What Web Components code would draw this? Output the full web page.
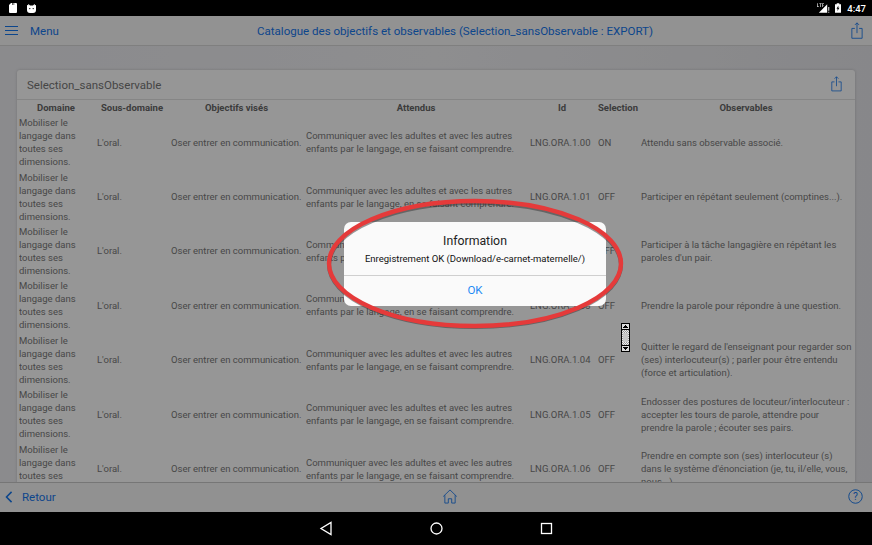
<!DOCTYPE html>
<html lang="fr">
<head>
<meta charset="utf-8">
<title>Catalogue</title>
<style>
  html, body { margin: 0; height: 100%; background: #000; }
  body { font-family: Roboto, "Liberation Sans", sans-serif; overflow: hidden; }
</style>
</head>
<body>
<app-screen>
  <status-bar slot="status"></status-bar>
  <top-bar slot="top" title-text="Catalogue des objectifs et observables (Selection_sansObservable : EXPORT)"></top-bar>
  <catalogue-card slot="main" heading="Selection_sansObservable"></catalogue-card>
  <bottom-bar slot="bottom"></bottom-bar>
  <info-dialog slot="overlay" heading="Information" message="Enregistrement OK (Download/e-carnet-maternelle/)"></info-dialog>
  <nav-bar slot="nav"></nav-bar>
</app-screen>

<script>
const SHARE_ICON = `<svg viewBox="0 0 14 20" fill="none" stroke="currentColor" stroke-width="1"><path d="M4.5 7.5H1v11.5h12V7.5H9.5"/><path d="M7 13V1M4.6 3.4 7 1l2.4 2.4"/></svg>`;

class AppScreen extends HTMLElement {
    constructor() {
        super();
        this.attachShadow({ mode: 'open' });
    }

    connectedCallback() {
        this.shadowRoot.innerHTML = `
        <style>
            :host { display: flex; flex-direction: column; width: 872px; height: 545px; position: relative; }
            .app { flex: 1; min-height: 0; display: flex; flex-direction: column; position: relative; }
            main {
                flex: 1; min-height: 0; overflow: hidden; padding: 24px 17px 0;
                background: linear-gradient(90deg, #ececf0 0, #f1f1f4 50%, #e6e6ea 100%);
            }
            .dim { position: absolute; inset: 0; background: rgba(0, 0, 0, .41); }
        </style>
        <slot name="status"></slot>
        <div class="app">
            <slot name="top"></slot>
            <main><slot name="main"></slot></main>
            <slot name="bottom"></slot>
            <div class="dim"></div>
            <slot name="overlay"></slot>
        </div>
        <slot name="nav"></slot>`;
    }
}

class StatusBar extends HTMLElement {
    constructor() {
        super();
        this.attachShadow({ mode: 'open' });
    }

    connectedCallback() {
        this.shadowRoot.innerHTML = `
        <style>
            :host { display: flex; align-items: center; height: 16px; background: #000; color: #fff; padding: 0 6px 0 9px; flex: none; }
            svg { display: block; fill: #fff; }
            .left { display: flex; align-items: center; gap: 10px; }
            .right { margin-left: auto; display: flex; align-items: center; gap: 5px; }
            span { font: 500 9.5px Roboto, sans-serif; margin-left: 1px; }
        </style>
        <div class="left">
            <svg width="8" height="10" viewBox="0 0 8 10"><path d="M2 0h1v2h.6V0h1v2h.6V0H7a1 1 0 0 1 1 1v8a1 1 0 0 1-1 1H1a1 1 0 0 1-1-1V2z"/></svg>
            <svg width="9" height="9" viewBox="0 0 9 9"><path d="M1.5 0 3 1.4h3L7.5 0l.5.5L7 1.6a1 1 0 0 1 2 1V6a3 3 0 0 1-3 3H3A3 3 0 0 1 0 6V2.6a1 1 0 0 1 2-1L1 .5z"/><circle cx="2.8" cy="4.6" r=".7" fill="#000"/><circle cx="6.2" cy="4.6" r=".7" fill="#000"/></svg>
        </div>
        <div class="right">
            <svg width="13" height="10" viewBox="0 0 14 10"><path d="M11 1v9H2z"/><path d="M12.2 4h1v4h-1zM12.2 9h1v1h-1z"/><path d="M0 0h.8v3H2v.8H0zM2.6 0h2.4v.8h-.8v3h-.8V.8h-.8zM5.6 0h1.8v.8h-1v.9h.9v.7h-.9v1.4h-.8z" opacity=".8"/></svg>
            <svg width="6" height="10" viewBox="0 0 7 11"><path fill-rule="evenodd" d="M2 0h3v1h2v10H0V1h2zM4 2.5 1.8 6.3h1.3L2.8 9l2.4-3.9H3.8z"/></svg>
            <span>4:47</span>
        </div>`;
    }
}

class TopBar extends HTMLElement {
    constructor() {
        super();
        this.attachShadow({ mode: 'open' });
    }

    connectedCallback() {
        this.shadowRoot.innerHTML = `
        <style>
            :host {
                display: grid; grid-template-columns: 1fr auto 1fr; align-items: center; flex: none;
                height: 29px; background: #f8f8f8; border-bottom: 1px solid #d9d9d9; color: #1677ee;
            }
            .menu { display: flex; align-items: center; gap: 12px; padding-left: 5px; font-size: 11.5px; }
            .burger { width: 13px; height: 7px; margin-bottom: 1px; border-top: 1px solid; border-bottom: 1px solid; position: relative; }
            .burger::after { content: ""; position: absolute; left: 0; right: 0; top: 3px; border-top: 1px solid; }
            .title { font-size: 11.55px; padding-left: 38px; }
            .share { justify-self: end; width: 12px; height: 17px; margin-right: 9px; }
        </style>
        <div class="menu"><div class="burger"></div><span>Menu</span></div>
        <div class="title">${this.getAttribute('title-text')}</div>
        <div class="share">${SHARE_ICON}</div>`;
    }
}

class CatalogueCard extends HTMLElement {
    constructor() {
        super();
        this.attachShadow({ mode: 'open' });
    }

    connectedCallback() {
        const rows = [
            ['1.00', 'ON', 'Attendu sans observable associé.'],
            ['1.01', 'OFF', 'Participer en répétant seulement (comptines...).'],
            ['1.02', 'OFF', 'Participer à la tâche langagière en répétant les paroles d\'un pair.'],
            ['1.03', 'OFF', 'Prendre la parole pour répondre à une question.'],
            ['1.04', 'OFF', 'Quitter le regard de l\'enseignant pour regarder son (ses) interlocuteur(s) ; parler pour être entendu (force et articulation).'],
            ['1.05', 'OFF', 'Endosser des postures de locuteur/interlocuteur : accepter les tours de parole, attendre pour prendre la parole ; écouter ses pairs.'],
            ['1.06', 'OFF', 'Prendre en compte son (ses) interlocuteur (s) dans le système d\'énonciation (je, tu, il/elle, vous, nous...).']
        ];
        const cols = ['Domaine', 'Sous-domaine', 'Objectifs visés', 'Attendus', 'Id', 'Selection', 'Observables'];
        this.shadowRoot.innerHTML = `
        <style>
            :host { display: block; background: #fff; border-radius: 3px; box-shadow: 0 0 3px rgba(0,0,0,.18); height: 440px; overflow: hidden; }
            header {
                display: flex; align-items: center; justify-content: space-between; height: 29px;
                padding: 0 13px 0 10px; border-bottom: 1px solid #e2e2e2; font-size: 11.5px; color: #777;
            }
            .share { width: 11px; height: 15px; margin-bottom: 2px; color: #1677ee; }
            .grid { display: grid; grid-template-columns: 78px 74px 135px 224px 68px 43px 214px; padding-left: 2px; font-size: 9.5px; color: #7a7a7a; }
            .th { height: 15px; line-height: 15px; text-align: center; font-weight: 700; padding-right: 4px; white-space: nowrap; color: #666; }
            .td { height: 54.4px; display: flex; align-items: center; line-height: 13px; overflow: hidden; padding-right: 2px; box-sizing: border-box; }
            .td > span { display: block; }
        </style>
        <header><span>${this.getAttribute('heading')}</span><div class="share">${SHARE_ICON}</div></header>
        <div class="grid">
            ${cols.map(c => `<div class="th">${c}</div>`).join('')}
            ${rows.map(r => `
                <div class="td"><span>Mobiliser le langage dans toutes ses dimensions.</span></div>
                <div class="td"><span>L'oral.</span></div>
                <div class="td"><span>Oser entrer en communication.</span></div>
                <div class="td"><span>Communiquer avec les adultes et avec les autres enfants par le langage, en se faisant comprendre.</span></div>
                <div class="td"><span>LNG.ORA.${r[0]}</span></div>
                <div class="td"><span>${r[1]}</span></div>
                <div class="td"><span>${r[2]}</span></div>`).join('')}
        </div>`;
    }
}

class BottomBar extends HTMLElement {
    constructor() {
        super();
        this.attachShadow({ mode: 'open' });
    }

    connectedCallback() {
        this.shadowRoot.innerHTML = `
        <style>
            :host {
                display: grid; grid-template-columns: 1fr auto 1fr; align-items: center; flex: none;
                height: 27px; padding-bottom: 2px; background: #f6f6f6; border-top: 1px solid #c9c9c9; color: #1677ee;
            }
            .back { display: flex; align-items: center; gap: 9px; padding-left: 5px; font-size: 11.5px; }
            svg { display: block; }
            .home { margin-left: 28px; }
            .help { justify-self: end; margin-right: 9px; }
        </style>
        <div class="back">
            <svg width="8" height="12" viewBox="0 0 9 14" fill="none" stroke="currentColor" stroke-width="1.8"><path d="M7.5 1 1.6 7l5.9 6"/></svg>
            <span>Retour</span>
        </div>
        <svg class="home" width="16" height="15" viewBox="0 0 16 16" fill="none" stroke="currentColor" stroke-width=".9"><path d="M.8 8 8 1l7.2 7M2.500 6.600V15h3.700v-4.600h3.600V15h3.700V6.600"/></svg>
        <svg class="help" width="15" height="15" viewBox="0 0 16 16"><circle cx="8" cy="8" r="7.2" fill="none" stroke="currentColor" stroke-width="1"/><text x="8" y="12" text-anchor="middle" font-family="Roboto" font-size="11" fill="currentColor">?</text></svg>`;
    }
}

class InfoDialog extends HTMLElement {
    constructor() {
        super();
        this.attachShadow({ mode: 'open' });
    }

    connectedCallback() {
        this.shadowRoot.innerHTML = `
        <style>
            :host { position: absolute; left: 344px; top: 206px; width: 262px; height: 84px; display: flex; flex-direction: column; background: #fafafa; border-radius: 7px; color: #111; text-align: center; }
            .body { height: 54px; border-bottom: 1px solid #cfcfcf; box-sizing: border-box; padding-top: 11px; }
            h2 { margin: 0; font: 400 12.3px/16px Roboto, sans-serif; color: #222; }
            p { margin: 3px 0 0; font-size: 9.5px; line-height: 13px; }
            .ok { flex: 1; display: flex; align-items: center; justify-content: center; padding-bottom: 2px; color: #1f8bf5; font-size: 11.5px; }
            .ring { position: absolute; left: -22px; top: -28px; overflow: visible; pointer-events: none; }
            .scroller { position: absolute; left: 277px; top: 101px; width: 9px; height: 29px; }
        </style>
        <div class="body"><h2>${this.getAttribute('heading')}</h2><p>${this.getAttribute('message')}</p></div>
        <div class="ok">OK</div>
        <svg class="ring" width="306" height="140" viewBox="0 0 306 140" fill="none">
            <ellipse cx="153" cy="71" rx="146" ry="62" stroke="#333" stroke-opacity=".5" stroke-width="4"/>
            <ellipse cx="153" cy="69.5" rx="146" ry="62.5" stroke="#e53a3a" stroke-width="4.4"/>
        </svg>
        <svg class="scroller" viewBox="0 0 9 29" shape-rendering="crispEdges">
            <defs><pattern id="check" width="2" height="2" patternUnits="userSpaceOnUse"><rect width="2" height="2" fill="#eee"/><rect width="1" height="1" fill="#999"/><rect x="1" y="1" width="1" height="1" fill="#999"/></pattern></defs>
            <rect x=".5" y=".5" width="8" height="28" fill="url(#check)" stroke="#000"/>
            <rect x="1" y="1" width="7" height="5" fill="#ddd"/><path d="M4.5 2 7 5H2z" fill="#000"/>
            <rect x="1" y="23" width="7" height="5" fill="#ddd"/><path d="M4.5 27 7 24H2z" fill="#000"/>
            <path d="M1 6h7v1H1zM1 22h7v1H1z" fill="#000"/>
            <rect x="2" y="10" width="5" height="9" fill="#c8c8c8"/>
        </svg>`;
    }
}

class NavBar extends HTMLElement {
    constructor() {
        super();
        this.attachShadow({ mode: 'open' });
    }

    connectedCallback() {
        this.shadowRoot.innerHTML = `
        <style>
            :host { display: flex; justify-content: center; align-items: center; gap: 95px; height: 33px; background: #000; flex: none; }
            svg { display: block; }
        </style>
        <svg width="15" height="15" viewBox="0 0 15 15" fill="none" stroke="#fff" stroke-width="1.3"><path d="M12 1.500v12L2 7.500z"/></svg>
        <svg width="15" height="15" viewBox="0 0 15 15" fill="none" stroke="#fff" stroke-width="1.3"><circle cx="7.500" cy="7.500" r="5.500"/></svg>
        <svg width="15" height="15" viewBox="0 0 15 15" fill="none" stroke="#fff" stroke-width="1.3"><rect x="2.500" y="2.500" width="10" height="10"/></svg>`;
    }
}

customElements.define('app-screen', AppScreen);
customElements.define('status-bar', StatusBar);
customElements.define('top-bar', TopBar);
customElements.define('catalogue-card', CatalogueCard);
customElements.define('bottom-bar', BottomBar);
customElements.define('info-dialog', InfoDialog);
customElements.define('nav-bar', NavBar);
</script>
</body>
</html>
